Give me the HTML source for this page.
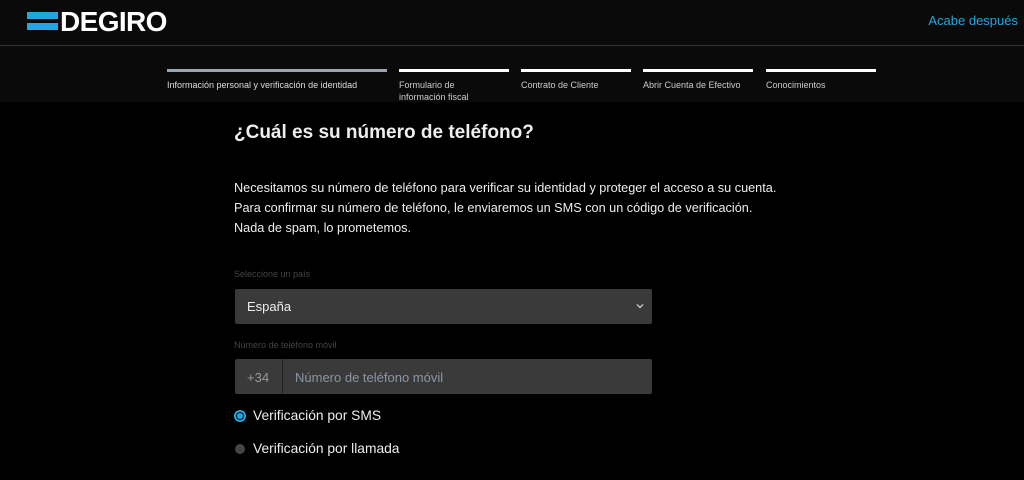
<!DOCTYPE html><html><head><style>
body{margin:0;width:1024px;height:480px;background:#000;font-family:"Liberation Sans",sans-serif;color:#fff;position:relative;overflow:hidden}
.a{position:absolute}
.hdr{left:0;top:0;width:1024px;height:45px;background:#0a0a0a;border-bottom:1px solid #333}
.stp{left:0;top:46px;width:1024px;height:56px;background:#0a0a0a}
.bar{height:3px;top:69px;background:#fff}
.lab{top:79px;font-size:9px;color:#ccc;line-height:12px}
.box{background:#3a3a3a;border-radius:2px}
</style></head><body>
<div class="a hdr"></div>
<div class="a" style="left:27px;top:12px;width:31px;height:7px;background:#1fa8e0"></div>
<div class="a" style="left:27px;top:23px;width:31px;height:7px;background:#1fa8e0"></div>
<div class="a" style="left:60px;top:6px;font-size:28px;font-weight:bold;letter-spacing:-0.6px">DEGIRO</div>
<div class="a" style="right:6px;top:13px;font-size:13px;color:#1fa8e0">Acabe después</div>
<div class="a stp"></div>
<div class="a bar" style="left:167px;width:220px;background:#9aa5b1"></div>
<div class="a bar" style="left:399px;width:110px"></div>
<div class="a bar" style="left:521px;width:110px"></div>
<div class="a bar" style="left:643px;width:110px"></div>
<div class="a bar" style="left:766px;width:110px"></div>
<div class="a lab" style="left:167px;color:#ddd">Información personal y verificación de identidad</div>
<div class="a lab" style="left:399px">Formulario de<br>información fiscal</div>
<div class="a lab" style="left:521px">Contrato de Cliente</div>
<div class="a lab" style="left:643px">Abrir Cuenta de Efectivo</div>
<div class="a lab" style="left:766px">Conocimientos</div>
<div class="a" style="left:234px;top:122px;font-size:19px;font-weight:bold;color:#eee">¿Cuál es su número de teléfono?</div>
<div class="a" style="left:234px;top:178px;font-size:12.7px;line-height:20px;color:#eee">Necesitamos su número de teléfono para verificar su identidad y proteger el acceso a su cuenta.<br>Para confirmar su número de teléfono, le enviaremos un SMS con un código de verificación.<br>Nada de spam, lo prometemos.</div>
<div class="a" style="left:234px;top:269px;font-size:9px;color:#444">Seleccione un país</div>
<div class="a box" style="left:235px;top:289px;width:417px;height:35px"></div>
<div class="a" style="left:247px;top:299px;font-size:13px;color:#eee">España</div>
<svg class="a" style="left:636px;top:303px" width="8" height="6"><path d="M1 1.5L4 4.5L7 1.5" stroke="#ccc" stroke-width="1.3" fill="none"/></svg>
<div class="a" style="left:234px;top:340px;font-size:9px;color:#444">Número de teléfono móvil</div>
<div class="a box" style="left:235px;top:359px;width:417px;height:35px"></div>
<div class="a" style="left:282px;top:359px;width:1px;height:35px;background:#222"></div>
<div class="a" style="left:247px;top:370px;font-size:13px;color:#999">+34</div>
<div class="a" style="left:295px;top:370px;font-size:13px;color:#8a96a3">Número de teléfono móvil</div>
<div class="a" style="left:234px;top:410px;width:8px;height:8px;border:2px solid #1fa8e0;border-radius:50%;background:#000"></div>
<div class="a" style="left:237px;top:413px;width:6px;height:6px;border-radius:50%;background:#1fa8e0"></div>
<div class="a" style="left:253px;top:408px;font-size:13.8px;color:#eee">Verificación por SMS</div>
<div class="a" style="left:235px;top:444px;width:10px;height:10px;border-radius:50%;background:#444"></div>
<div class="a" style="left:253px;top:441px;font-size:13.8px;color:#eee">Verificación por llamada</div>
</body></html>
